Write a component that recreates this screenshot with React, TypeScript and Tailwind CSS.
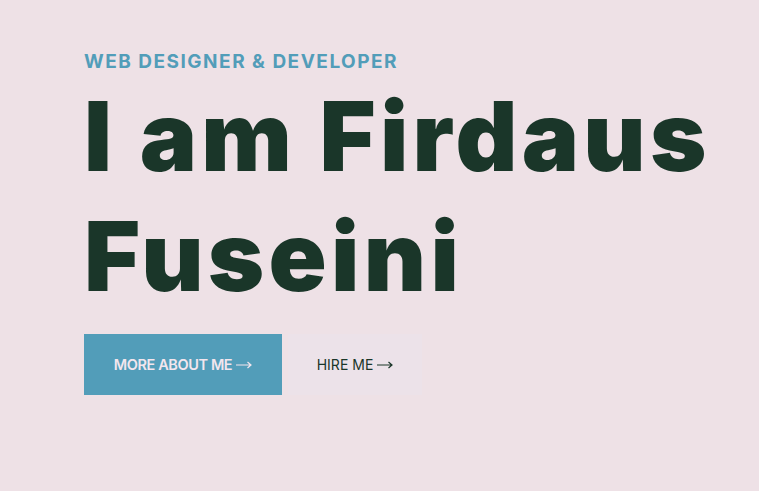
function Arrow() {
  return (
    <svg width="16" height="8" viewBox="0 0 16 8" fill="none" className="ml-[4px] inline-block">
      <path d="M0 4H15M11.5 1L15 4L11.5 7" stroke="currentColor" strokeWidth="1.2" />
    </svg>
  );
}

export default function App() {
  return (
    <div className="min-h-screen w-full bg-[#eee1e6] font-['Inter',sans-serif]">
      <section className="pl-[84px] pt-[50px]">
        <p className="text-[19px] leading-[24px] font-bold tracking-[1.5px] text-[#529db9]">
          WEB DESIGNER &amp; DEVELOPER
        </p>
        <h1 className="mt-[2px] text-[96px] leading-[120px] font-black tracking-[4.3px] text-[#1a3629]">
          I am Firdaus
          <br />
          Fuseini
        </h1>
        <div className="mt-[18px] flex items-center">
          <a
            href="#"
            className="flex h-[61px] w-[198px] items-center justify-center bg-[#529db9] text-[14.5px] font-semibold tracking-[-0.4px] text-[#f3e6ee]"
          >
            MORE ABOUT ME
            <Arrow />
          </a>
          <a
            href="#"
            className="ml-[6px] flex h-[61px] w-[134px] items-center justify-center bg-[#ece2e9] text-[14px] font-normal text-[#1a3629]"
          >
            HIRE ME
            <Arrow />
          </a>
        </div>
      </section>
    </div>
  );
}
